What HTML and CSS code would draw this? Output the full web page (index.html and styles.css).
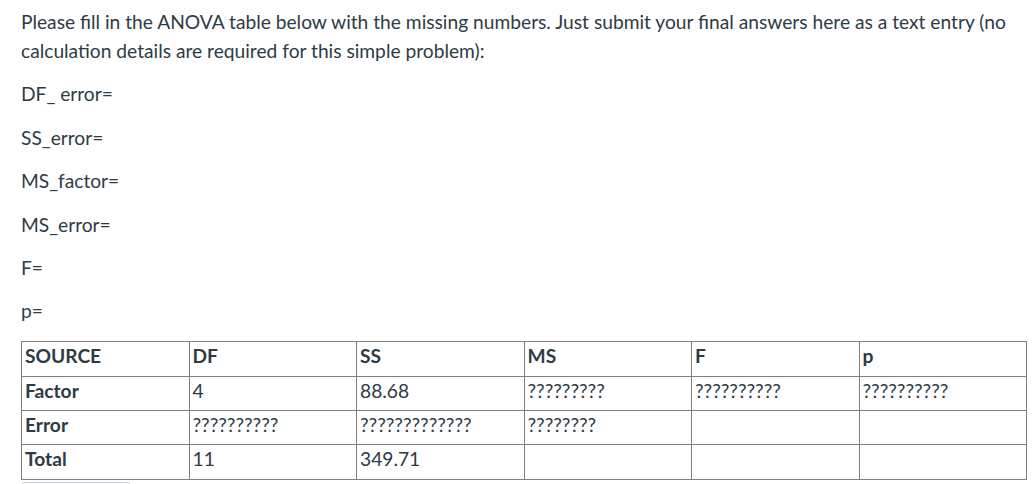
FILE: index.html
```html
<!DOCTYPE html>
<html>
<head>
<meta charset="utf-8">
<link rel="stylesheet" href="styles.css">
</head>
<body>
<div class="question">
  <p>Please fill in the ANOVA table below with the missing numbers. Just submit your final answers here as a text entry (no calculation details are required for this simple problem):</p>
  <p>DF_ error=</p>
  <p>SS_error=</p>
  <p>MS_factor=</p>
  <p>MS_error=</p>
  <p>F=</p>
  <p>p=</p>
  <table class="anova">
    <tbody>
      <tr class="head"><td>SOURCE</td><td>DF</td><td>SS</td><td>MS</td><td>F</td><td>p</td></tr>
      <tr><td class="src">Factor</td><td>4</td><td>88.68</td><td class="q">?????????</td><td class="q">??????????</td><td class="q">??????????</td></tr>
      <tr><td class="src">Error</td><td class="q">??????????</td><td class="q">?????????????</td><td class="q">????????</td><td></td><td></td></tr>
      <tr><td class="src">Total</td><td>11</td><td>349.71</td><td></td><td></td><td></td></tr>
    </tbody>
  </table>
  <div class="answer-box"></div>
</div>
</body>
</html>
```
FILE: styles.css
```css
html, body {
  margin: 0;
  padding: 0;
  background: #ffffff;
}
body {
  font-family: Lato, "Open Sans", sans-serif;
  color: #2d3b45;
  font-size: 19.2px;
  line-height: 29px;
}
.question {
  width: 1005px;
  padding: 7px 0 0 21px;
}
.question p {
  margin: 0 0 14.4px 0;
}
.anova {
  margin-top: 16px;
  width: 1006px;
  border-collapse: collapse;
  table-layout: fixed;
}
.anova tr {
  height: 34.3px;
}
.anova td {
  border: 1px solid #808080;
  padding: 0 3px 5px 3px;
  vertical-align: middle;
  line-height: 24px;
}
.anova .head td {
  font-weight: bold;
}
.anova .src {
  font-weight: bold;
}
.answer-box {
  width: 108px;
  height: 20px;
  margin-top: 2px;
  border: 1px solid #c7cdd1;
  border-radius: 4px;
}
```
